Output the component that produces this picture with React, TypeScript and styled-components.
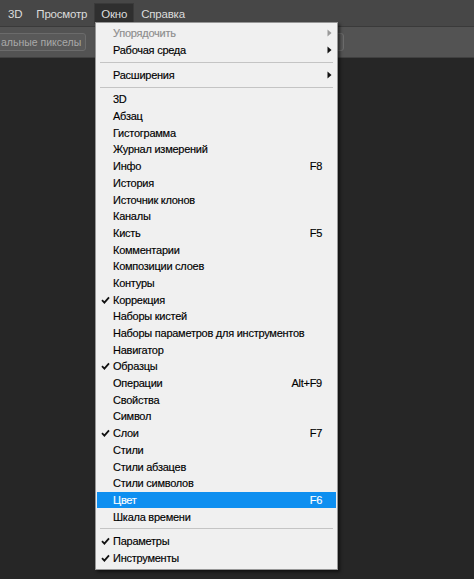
import React from 'react';
import styled, { createGlobalStyle } from 'styled-components';

const GlobalStyle = createGlobalStyle`
  html, body {
    margin: 0;
    padding: 0;
    background: #262626;
    overflow: hidden;
  }
  body {
    font-family: 'Liberation Sans', Arial, sans-serif;
  }
`;

const Screen = styled.div`
  position: relative;
  width: 474px;
  height: 579px;
  background: #262626;
  overflow: hidden;
`;

const MenuBar = styled.div`
  display: flex;
  align-items: center;
  height: 26px;
  padding-left: 1px;
  background: #474747;
  border-bottom: 1px solid #3a3a3a;
`;

const BarItem = styled.div<{ $open?: boolean }>`
  height: 20px;
  line-height: 21px;
  padding: 0 6px;
  font-size: 11.5px;
  letter-spacing: -0.2px;
  color: #dcdcdc;
  background: ${({ $open }) => ($open ? '#2f2f2f' : 'transparent')};
  border: 1px solid ${({ $open }) => ($open ? '#3a3a3a' : 'transparent')};
  border-bottom: none;
`;

const Toolbar = styled.div`
  display: flex;
  align-items: center;
  gap: 9px;
  height: 30px;
  background: #535353;
  border-bottom: 1px solid #404040;
`;

const ToolButton = styled.div<{ $w: number; $shift?: number }>`
  width: ${({ $w }) => $w}px;
  height: 16px;
  line-height: 16px;
  margin-left: ${({ $shift }) => $shift ?? 0}px;
  border: 1px solid #6b6b6b;
  border-radius: 3px;
  background: #595959;
  color: #a9a9a9;
  font-size: 10.5px;
  padding-left: ${({ $shift }) => -($shift ?? 0)}px;
  white-space: nowrap;
  overflow: hidden;
`;

const Dropdown = styled.div`
  position: absolute;
  left: 95px;
  top: 22px;
  width: 241px;
  padding: 2px 0 3px;
  background: #f0f0f0;
  border: 1px solid #979797;
  box-shadow: 2px 2px 3px rgba(0, 0, 0, 0.55);
`;

const Row = styled.div<{ $active?: boolean; $disabled?: boolean }>`
  display: flex;
  align-items: center;
  height: 16.7px;
  margin: 0 1px;
  font-size: 11px;
  letter-spacing: -0.25px;
  color: ${({ $active, $disabled }) => ($active ? '#ffffff' : $disabled ? '#8d8d8d' : '#000000')};
  background: ${({ $active }) => ($active ? '#0e8ff0' : 'transparent')};
  -webkit-text-stroke: 0.15px currentColor;
`;

const Check = styled.span`
  flex: none;
  width: 16px;
  display: flex;
  align-items: center;
  justify-content: center;
`;

const Label = styled.span`
  flex: 1;
  min-width: 0;
  white-space: nowrap;
`;

const Shortcut = styled.span`
  flex: none;
  width: 44px;
  text-align: right;
  white-space: nowrap;
`;

const Arrow = styled.span<{ $disabled?: boolean }>`
  flex: none;
  width: 14px;
  display: flex;
  justify-content: center;
  color: ${({ $disabled }) => ($disabled ? '#9a9a9a' : '#111')};
`;

const Separator = styled.div`
  height: 1px;
  margin: 3.5px 4px 3.5px 4px;
  background: #c4c4c4;
`;

type Item =
  | { sep: true }
  | { label: string; key?: string; checked?: boolean; sub?: boolean; disabled?: boolean; active?: boolean };

const items: Item[] = [
  { label: 'Упорядочить', sub: true, disabled: true },
  { label: 'Рабочая среда', sub: true },
  { sep: true },
  { label: 'Расширения', sub: true },
  { sep: true },
  { label: '3D' },
  { label: 'Абзац' },
  { label: 'Гистограмма' },
  { label: 'Журнал измерений' },
  { label: 'Инфо', key: 'F8' },
  { label: 'История' },
  { label: 'Источник клонов' },
  { label: 'Каналы' },
  { label: 'Кисть', key: 'F5' },
  { label: 'Комментарии' },
  { label: 'Композиции слоев' },
  { label: 'Контуры' },
  { label: 'Коррекция', checked: true },
  { label: 'Наборы кистей' },
  { label: 'Наборы параметров для инструментов' },
  { label: 'Навигатор' },
  { label: 'Образцы', checked: true },
  { label: 'Операции', key: 'Alt+F9' },
  { label: 'Свойства' },
  { label: 'Символ' },
  { label: 'Слои', key: 'F7', checked: true },
  { label: 'Стили' },
  { label: 'Стили абзацев' },
  { label: 'Стили символов' },
  { label: 'Цвет', key: 'F6', active: true },
  { label: 'Шкала времени' },
  { sep: true },
  { label: 'Параметры', checked: true },
  { label: 'Инструменты', checked: true },
];

function CheckMark() {
  return (
    <svg width="9" height="8" viewBox="0 0 9 8">
      <path d="M1 4.2 L3.4 6.6 L8 1.4" fill="none" stroke="#111" strokeWidth="1.8" />
    </svg>
  );
}

function SubArrow() {
  return (
    <svg width="5" height="8" viewBox="0 0 5 8">
      <path d="M0.5 0.5 L4.5 4 L0.5 7.5 Z" fill="currentColor" />
    </svg>
  );
}

export default function App() {
  return (
    <Screen>
      <GlobalStyle />
      <MenuBar>
        <BarItem>3D</BarItem>
        <BarItem>Просмотр</BarItem>
        <BarItem $open>Окно</BarItem>
        <BarItem>Справка</BarItem>
      </MenuBar>
      <Toolbar>
        <ToolButton $w={84} $shift={-3}>альные пикселы</ToolButton>
        <ToolButton $w={247} />
      </Toolbar>
      <Dropdown>
        {items.map((it, i) =>
          'sep' in it ? (
            <Separator key={i} />
          ) : (
            <Row key={i} $active={it.active} $disabled={it.disabled}>
              <Check>{it.checked && <CheckMark />}</Check>
              <Label>{it.label}</Label>
              <Shortcut>{it.key}</Shortcut>
              <Arrow $disabled={it.disabled}>{it.sub && <SubArrow />}</Arrow>
            </Row>
          )
        )}
      </Dropdown>
    </Screen>
  );
}
